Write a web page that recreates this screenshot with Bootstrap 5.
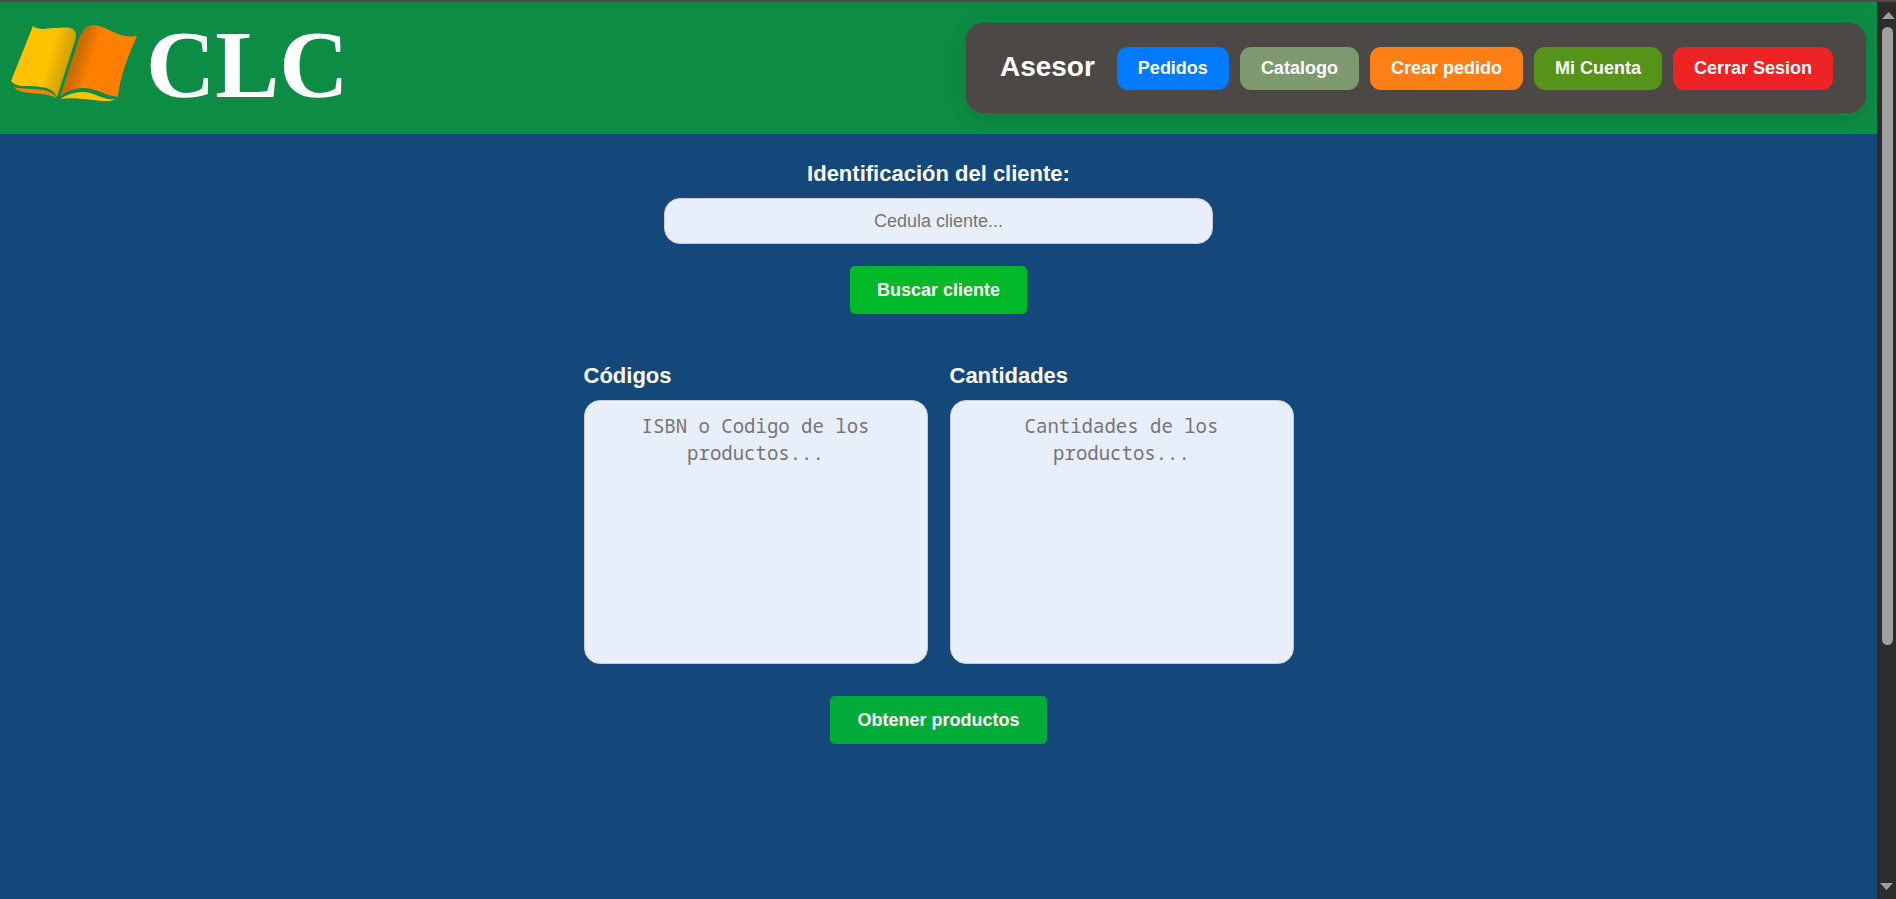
<!DOCTYPE html>
<html lang="es">
<head>
<meta charset="utf-8">
<meta name="viewport" content="width=device-width, initial-scale=1">
<title>CLC - Crear pedido</title>
<link href="https://cdn.jsdelivr.net/npm/bootstrap@5.3.0/dist/css/bootstrap.min.css" rel="stylesheet">
<style>
  body { background: #14487a; color: #fff; font-family: "Liberation Sans", Arial, sans-serif; font-size: 18px; }
  .top-edge { height: 2px; background: #4b4846; }
  .site-header { background: #0d8c45; min-height: 132px; padding: 21px 11px; }
  .brand { gap: 9px; color: #fff; text-decoration: none; }
  .brand-name { font: bold 96px/84px "Liberation Serif", "Times New Roman", serif; }
  .user-panel { background: #4b4846; border-radius: 17px; padding: 24px 33px 23px 34px; gap: 11px; box-shadow: 0 4px 18px rgba(0, 0, 0, .12); }
  .role { font-size: 28px; font-weight: bold; line-height: 38px; margin: 0 11px 4px 0; }
  .btn { color: #fff; font-size: 18px; font-weight: bold; border: 0; }
  .btn:hover { color: #fff; filter: brightness(1.1); }
  .user-panel .btn { padding: 8px 21px; border-radius: 11px; line-height: 27px; }
  .c-blue { background: #007bff; }
  .c-sage { background: #7e996f; }
  .c-orange { background: #ff7f17; }
  .c-olive { background: #559418; }
  .c-red { background: #ee2323; }
  .c-green { background: #00b828; }
  .c-emerald { background: #00ab38; }
  .action { padding: 11px 27px; border-radius: 5px; line-height: 26px; }
  .form-label { font-size: 22px; font-weight: bold; line-height: 32px; margin-bottom: 8px; }
  .form-control, .form-control:focus { background: #e9effa; border: 1px solid #ccc; border-radius: 16px; text-align: center; color: #222; }
  .form-control::placeholder { color: #757575; }
  .client-form { width: 549px; max-width: 100%; padding-top: 24px; }
  .client-form .form-control { font-size: 18px; line-height: 26px; padding: 9px 12px; margin-bottom: 22px; }
  .product-form { width: 710px; max-width: 100%; padding-top: 46px; }
  .fields { gap: 22px; margin-bottom: 32px; }
  textarea.form-control { height: 264px; resize: none; padding: 12px 22px; font: 19px/27px "Noto Sans Mono", "DejaVu Sans Mono", monospace; }
  .scroll-rail { width: 19px; background: #2c2c2c; padding: 9px 0 8px; }
  .thumb { width: 11px; background: #9f9f9f; border-radius: 6px; flex: 618 1 0; margin-left: 2px; }
  .rail-rest { flex: 238 1 0; }
</style>
</head>
<body class="min-vh-100 d-flex flex-column">
<div class="top-edge"></div>
<div class="d-flex flex-grow-1">
  <div class="flex-grow-1">
    <header class="site-header d-flex flex-wrap justify-content-between align-items-start">
      <a class="brand d-flex align-items-start" href="#" aria-label="CLC">
        <svg width="126" height="80" viewBox="11 23 126 80" aria-hidden="true">
          <defs>
            <linearGradient id="pageLeft" gradientUnits="userSpaceOnUse" x1="48" y1="60" x2="69" y2="66"><stop stop-color="#ffc200"/><stop offset="1" stop-color="#cc9d00"/></linearGradient>
            <linearGradient id="pageRight" gradientUnits="userSpaceOnUse" x1="70" y1="58" x2="91" y2="65"><stop stop-color="#cb6900"/><stop offset=".35" stop-color="#d06b00"/><stop offset="1" stop-color="#ff8000"/></linearGradient>
          </defs>
          <path fill="url(#pageLeft)" d="M33 26c5 4 12 3 20 2 8 0 17-2 21 2 3 3 2 7 1 11L57 97c-6-12-19-10-32-11-7 0-12-2-14-5z"/>
          <path fill="url(#pageRight)" d="M60 97 78 42c3-10 8-17 15-17 13 0 24 14 44 11-8 18-17 39-19 61-11-1-22-9-35-9-10 0-18 4-23 9z"/>
          <path fill="#ff8000" d="M14 87c12 4 34-2 43 11-12-7-37-2-43-11z"/>
          <path fill="#ffc200" d="M60 99c12-8 25-9 36-4 7 3 12 5 20 4-12 6-33-3-56 0z"/>
        </svg>
        <span class="brand-name">CLC</span>
      </a>
      <nav class="user-panel d-flex flex-wrap align-items-center">
        <h1 class="role">Asesor</h1>
        <button type="button" class="btn c-blue">Pedidos</button>
        <button type="button" class="btn c-sage">Catalogo</button>
        <button type="button" class="btn c-orange">Crear pedido</button>
        <button type="button" class="btn c-olive">Mi Cuenta</button>
        <button type="button" class="btn c-red">Cerrar Sesion</button>
      </nav>
    </header>
    <main>
      <form class="client-form mx-auto text-center">
        <label class="form-label" for="cedula">Identificación del cliente:</label>
        <input class="form-control" id="cedula" type="text" placeholder="Cedula cliente...">
        <button type="button" class="btn action c-green">Buscar cliente</button>
      </form>
      <form class="product-form mx-auto text-center">
        <div class="fields d-flex text-start">
          <div class="flex-fill w-50">
            <label class="form-label d-block" for="codigos">Códigos</label>
            <textarea class="form-control" id="codigos" placeholder="ISBN o Codigo de los productos..."></textarea>
          </div>
          <div class="flex-fill w-50">
            <label class="form-label d-block" for="cantidades">Cantidades</label>
            <textarea class="form-control" id="cantidades" placeholder="Cantidades de los productos..."></textarea>
          </div>
        </div>
        <button type="button" class="btn action c-emerald">Obtener productos</button>
      </form>
    </main>
  </div>
  <div class="scroll-rail d-flex flex-column align-items-center" aria-hidden="true">
    <svg class="mb-2 ms-1 flex-shrink-0" width="13" height="8" viewBox="0 0 13 8"><path fill="#9f9f9f" d="M0 8 6.500 1 13 8z"/></svg>
    <div class="thumb"></div>
    <div class="rail-rest"></div>
    <svg class="flex-shrink-0" width="13" height="8" viewBox="0 0 13 8"><path fill="#9f9f9f" d="M0 0h13L6.500 7z"/></svg>
  </div>
</div>
<script src="https://cdn.jsdelivr.net/npm/bootstrap@5.3.0/dist/js/bootstrap.bundle.min.js"></script>
</body>
</html>
